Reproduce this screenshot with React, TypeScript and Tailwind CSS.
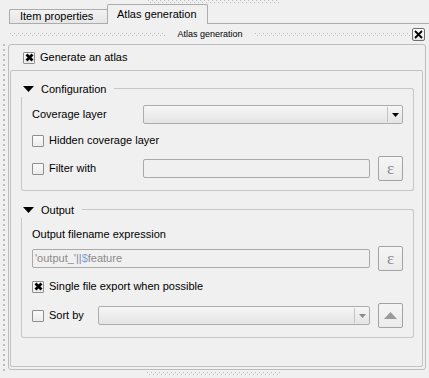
import React from 'react'

// QGIS composer "Atlas generation" dock, Windows look.

function Grip({ className = '' }: { className?: string }) {
  return (
    <div className={`flex flex-col justify-center gap-[1px] ${className}`}>
      <div className="h-[1px] bg-[repeating-linear-gradient(90deg,#bdbdbd_0_1px,transparent_1px_4px)]" />
      <div className="h-[1px] bg-[repeating-linear-gradient(90deg,transparent_0_2px,#bdbdbd_2px_3px,transparent_3px_4px)]" />
    </div>
  )
}

function Check({ checked = false }: { checked?: boolean }) {
  return (
    <span className="flex h-[12px] w-[12px] shrink-0 items-center justify-center rounded-[1px] border border-[#8f8f8f] bg-gradient-to-b from-[#fafafa] to-[#ececec]">
      {checked && (
        <svg width="9" height="9" viewBox="0 0 9 9">
          <path d="M1.5 1.5L7.5 7.5M7.5 1.5L1.5 7.5" stroke="#000" strokeWidth="2.8" strokeLinecap="butt" />
        </svg>
      )}
    </span>
  )
}

function Combo({ disabled = false, className = '' }: { disabled?: boolean; className?: string }) {
  return (
    <div
      className={`flex rounded-[2px] border border-[#acacac] bg-gradient-to-b from-[#f6f6f6] to-[#e4e4e4] ${className}`}
    >
      <div className="flex-1" />
      <div className="my-[1px] flex w-[15px] items-center justify-center border-l border-[#c4c4c4]">
        <svg width="7" height="4" viewBox="0 0 7 4">
          <path d="M0 0H7L3.5 4Z" fill={disabled ? '#8a8a8a' : '#000'} />
        </svg>
      </div>
    </div>
  )
}

function ToolBtn({ children }: { children: React.ReactNode }) {
  return (
    <div className="flex h-[25px] w-[25px] shrink-0 items-center justify-center rounded-[2px] border border-[#a3a3a3] bg-gradient-to-b from-[#f5f5f5] to-[#ebebeb]">
      {children}
    </div>
  )
}

function Epsilon() {
  return (
    <ToolBtn>
      <span className="font-['Liberation_Serif',serif] text-[17px] leading-none text-[#8a8a8a]">ε</span>
    </ToolBtn>
  )
}

function Group({ title, children, className = '' }: { title: string; children: React.ReactNode; className?: string }) {
  return (
    <div className={className}>
      <div className="flex h-[16px]">
        <div className="flex items-center pl-[2px] pr-[8px]">
          <svg width="11" height="6" viewBox="0 0 11 6">
            <path d="M0 0H11L5.5 6Z" fill="#000" />
          </svg>
          <span className="ml-[7px]">{title}</span>
        </div>
        <div className="mt-[7px] flex-1 rounded-tr-[3px] border-r border-t border-[#c6c6c6]" />
      </div>
      <div className="rounded-b-[3px] border-x border-b border-[#c6c6c6] px-[10px]">{children}</div>
    </div>
  )
}

export default function App() {
  return (
    <div className="flex h-[378px] w-[429px] flex-col overflow-hidden bg-[#f0f0f0] font-['Liberation_Sans',Arial,sans-serif] text-[11px] text-black">
      {/* top grip */}
      <div className="flex h-[4px] items-start">
        <Grip className="ml-[148px] h-[3px] w-[132px]" />
      </div>

      {/* tabs */}
      <div className="flex h-[20px] items-end pl-[9px]">
        <div className="flex h-[15px] w-[98px] items-center rounded-tl-[2px] border-b border-l border-t border-[#acacac] bg-gradient-to-b from-[#f2f2f2] to-[#e6e6e6] pl-[10px]">
          Item properties
        </div>
        <div className="flex h-[20px] w-[101px] items-center rounded-t-[2px] border-l border-r border-t border-[#acacac] bg-[#f0f0f0] pb-[1px] pl-[9px]">
          Atlas generation
        </div>
        <div className="flex-1 self-stretch border-b border-[#acacac]" />
      </div>

      {/* dock title */}
      <div className="mt-[4px] flex h-[13px] items-center pl-[10px]">
        <Grip className="h-[4px] flex-1" />
        <span className="mx-[12px] text-[9px] leading-none">Atlas generation</span>
        <Grip className="h-[4px] flex-1" />
        <div className="ml-[2px] mr-[4px] flex h-[13px] w-[13px] items-center justify-center rounded-[2px] border border-[#6f6f6f] bg-gradient-to-b from-[#ffffff] to-[#e6e6e6]">
          <svg width="9" height="9" viewBox="0 0 9 9">
            <path d="M1 1L8 8M8 1L1 8" stroke="#000" strokeWidth="1.8" />
          </svg>
        </div>
      </div>

      {/* body */}
      <div className="mt-[3px] flex h-[327px]">
        <div className="ml-[3px] w-[2px] bg-[repeating-linear-gradient(180deg,#bdbdbd_0_2px,transparent_2px_5px)]" />
        <div className="ml-[3px] mr-[3px] flex h-[326px] flex-1 flex-col rounded-[3px] border border-[#bdbdbd]">
          <div className="flex h-[25px] items-center pl-[14px]">
            <Check checked />
            <span className="ml-[5px]">Generate an atlas</span>
          </div>

          <div className="mb-[2px] ml-[1px] mr-[2px] flex-1 rounded-[2px] border border-[#c3c3c3] pl-[10px] pr-[8px] pt-[10px]">
            <Group title="Configuration">
              <div className="flex flex-col pb-[9px] pt-[8px]">
                <div className="flex h-[19px] items-center">
                  <span className="w-[111px]">Coverage layer</span>
                  <Combo className="h-[19px] flex-1" />
                </div>
                <div className="mt-[7px] flex h-[19px] items-center">
                  <Check />
                  <span className="ml-[5px]">Hidden coverage layer</span>
                </div>
                <div className="mt-[6px] flex h-[25px] items-center">
                  <Check />
                  <span className="ml-[5px] w-[94px]">Filter with</span>
                  <div className="h-[19px] flex-1 rounded-[2px] border border-[#a9a9a9] bg-[#f0f0f0]" />
                  <div className="ml-[8px]">
                    <Epsilon />
                  </div>
                </div>
              </div>
            </Group>

            <Group title="Output" className="mt-[11px]">
              <div className="flex flex-col pb-[9px] pt-[8px]">
                <div className="flex h-[16px] items-center">Output filename expression</div>
                <div className="mt-[4px] flex h-[25px] items-center">
                  <div className="flex h-[19px] flex-1 items-center rounded-[2px] border border-[#a9a9a9] bg-[#f0f0f0] pl-[2px] text-[#8a8a8a]">
                    <span>'output_'</span>
                    <span className="text-[#7d84b0]">||</span>
                    <span className="text-[#7fa3d6]">$</span>
                    <span>feature</span>
                  </div>
                  <div className="ml-[8px]">
                    <Epsilon />
                  </div>
                </div>
                <div className="mt-[6px] flex h-[19px] items-center">
                  <Check checked />
                  <span className="ml-[5px]">Single file export when possible</span>
                </div>
                <div className="mt-[7px] flex h-[25px] items-center">
                  <Check />
                  <span className="ml-[5px] w-[49px]">Sort by</span>
                  <Combo disabled className="h-[19px] flex-1" />
                  <div className="ml-[8px]">
                    <ToolBtn>
                      <svg width="13" height="7" viewBox="0 0 13 7">
                        <path d="M0 7H13L6.5 0Z" fill="#9a9a9a" />
                      </svg>
                    </ToolBtn>
                  </div>
                </div>
              </div>
            </Group>
          </div>
        </div>
      </div>

      {/* bottom grip */}
      <div className="flex h-[4px] items-start">
        <Grip className="ml-[147px] mt-[1px] h-[3px] w-[133px]" />
      </div>
    </div>
  )
}
